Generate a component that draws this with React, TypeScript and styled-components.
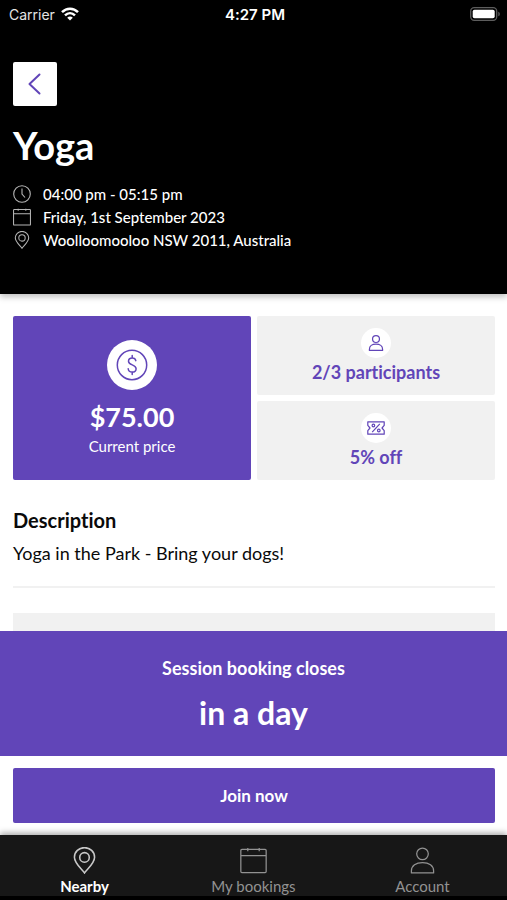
import React from "react";
import styled, { createGlobalStyle } from "styled-components";

const purple = "#6145b8";
const pale = "#f1f1f1";

const GlobalStyle = createGlobalStyle`
  *, *::before, *::after { box-sizing: border-box; }
  body {
    margin: 0;
    background: #fff;
    color: #0a0a0a;
    font-family: Lato, "Open Sans", sans-serif;
    font-variant-ligatures: none;
  }
  h1, h2, p, dl, ul { margin: 0; padding: 0; }
  button { font: inherit; cursor: pointer; }
  svg { display: block; flex: none; }
`;

const Screen = styled.div`
  display: flex;
  flex-direction: column;
  height: 100vh;
  overflow: hidden;
`;

const Header = styled.header`
  flex: none;
  padding: 0 13px 43px;
  background: #000;
  color: #fff;
  box-shadow: 0 3px 6px rgba(0, 0, 0, 0.25);
`;

const StatusBar = styled.div`
  display: grid;
  grid-template-columns: 1fr auto 1fr;
  align-items: center;
  height: 28px;
  margin: 0 -7px 34px -4px;
  font-family: Inter, sans-serif;
  font-size: 14px;
`;

const Carrier = styled.span`
  display: flex;
  align-items: center;
  gap: 6px;
  color: #e4e4e4;
`;

const Clock = styled.span`
  font-size: 15px;
  font-weight: 600;
`;

const BatteryHolder = styled.span`
  justify-self: end;
`;

const BackButton = styled.button`
  display: flex;
  align-items: center;
  justify-content: center;
  width: 44px;
  height: 44px;
  padding: 0;
  border: 0;
  border-radius: 2px;
  background: #fff;
  color: ${purple};
`;

const Title = styled.h1`
  margin: 18px 0 16px;
  font-size: 38px;
  line-height: 42px;
  font-weight: 700;
`;

const Details = styled.ul`
  list-style: none;
`;

const Detail = styled.li`
  display: flex;
  align-items: center;
  gap: 12px;
  height: 23px;
  font-size: 15px;
  font-weight: 500;
`;

const DetailIcon = styled.span`
  display: flex;
  justify-content: center;
  width: 18px;
  color: #b5b5b5;
`;

const Content = styled.main`
  flex: 1;
  min-height: 0;
  overflow: hidden;
  padding: 22px 12px 0 13px;
`;

const Stats = styled.section`
  display: grid;
  grid-template-columns: 1fr 1fr;
  grid-template-rows: 79px 79px;
  gap: 6px;
`;

const Card = styled.div<{ $primary?: boolean }>`
  display: flex;
  flex-direction: column;
  align-items: center;
  justify-content: center;
  padding-top: 2px;
  grid-row: ${(p) => (p.$primary ? "span 2" : "auto")};
  border-radius: 2px;
  background: ${(p) => (p.$primary ? purple : pale)};
  color: ${(p) => (p.$primary ? "#fff" : purple)};
`;

const Disc = styled.span<{ $size: number }>`
  display: flex;
  align-items: center;
  justify-content: center;
  width: ${(p) => p.$size}px;
  height: ${(p) => p.$size}px;
  border-radius: 50%;
  background: #fff;
  color: ${purple};
`;

const Price = styled.strong`
  margin-top: 10px;
  font-size: 27px;
  line-height: 34px;
`;

const PriceLabel = styled.span`
  font-size: 15px;
  line-height: 24px;
`;

const StatText = styled.strong`
  font-size: 18px;
  line-height: 28px;
`;

const Description = styled.section`
  margin-top: 26px;
  padding-bottom: 20px;
  border-bottom: 2px solid ${pale};
`;

const SectionTitle = styled.h2`
  font-size: 20px;
  line-height: 28px;
`;

const SectionText = styled.p`
  margin-top: 6px;
  font-size: 18px;
  line-height: 26px;
`;

const Panel = styled.div`
  height: 120px;
  margin-top: 25px;
  background: ${pale};
`;

const Banner = styled.section`
  flex: none;
  padding: 25px 13px 22px;
  background: ${purple};
  color: #fff;
  text-align: center;
  font-weight: 700;
`;

const BannerLabel = styled.p`
  font-size: 18px;
  line-height: 24px;
`;

const BannerValue = styled.p`
  margin-top: 12px;
  font-size: 32px;
  line-height: 42px;
`;

const Action = styled.div`
  flex: none;
  padding: 12px 12px 12px 13px;
`;

const JoinButton = styled.button`
  width: 100%;
  height: 55px;
  border: 0;
  border-radius: 2px;
  background: ${purple};
  color: #fff;
  font-size: 17px;
  font-weight: 700;
`;

const TabBar = styled.nav`
  display: grid;
  grid-template-columns: repeat(3, 1fr);
  flex: none;
  height: 65px;
  border-bottom: 4px solid #000;
  background: #171717;
  box-shadow: 0 -2px 6px rgba(0, 0, 0, 0.35);
`;

const Tab = styled.a<{ $active?: boolean }>`
  display: flex;
  flex-direction: column;
  align-items: center;
  padding-top: 12px;
  color: ${(p) => (p.$active ? "#fff" : "#929292")};
  font-size: 15px;
  line-height: 24px;
  font-weight: ${(p) => (p.$active ? 700 : 400)};
  text-decoration: none;

  svg {
    color: ${(p) => (p.$active ? "#c8c8c8" : "#929292")};
  }
`;

type IconProps = { size: number; stroke?: number };

const Pin = ({ size, stroke = 1.2 }: IconProps) => (
  <svg width={size} height={size} viewBox="0 0 26 26" fill="none" stroke="currentColor" strokeWidth={stroke} aria-hidden="true">
    <path d="M13 25C11 21.5 3.3 16 3.3 9.8a9.7 9.2 0 0 1 19.4 0C22.7 16 15 21.5 13 25Z" />
    <circle cx="13" cy="10" r="4.6" />
  </svg>
);

const Calendar = ({ size, stroke = 1.2 }: IconProps) => (
  <svg width={size} height={size} viewBox="0 0 26 26" fill="none" stroke="currentColor" strokeWidth={stroke} aria-hidden="true">
    <rect x="0.8" y="2.3" width="24.4" height="22.4" rx="1" />
    <path d="M1 8.3h24M7.5 1v3M18.5 1v3" />
  </svg>
);

const Person = ({ size, stroke = 1.2 }: IconProps) => (
  <svg width={size} height={size} viewBox="0 0 26 26" fill="none" stroke="currentColor" strokeWidth={stroke} strokeLinejoin="round" aria-hidden="true">
    <circle cx="13" cy="6.6" r="5.6" />
    <path d="M2.3 25v-2c0-4.8 4.4-8 10.7-8s10.7 3.2 10.7 8v2Z" />
  </svg>
);

const ClockIcon = () => (
  <svg width="18" height="18" viewBox="0 0 18 18" fill="none" stroke="currentColor" strokeWidth="1.1" aria-hidden="true">
    <circle cx="9" cy="9" r="8.3" />
    <path d="M9 3.5V9l3 3.5" />
  </svg>
);

const Chevron = () => (
  <svg width="16" height="24" viewBox="0 0 16 24" fill="none" stroke="currentColor" strokeWidth="2" strokeLinecap="round" strokeLinejoin="round" aria-hidden="true">
    <path d="M12.5 2.5 2.5 12l10 9.5" />
  </svg>
);

const Dollar = () => (
  <svg width="32" height="32" viewBox="0 0 32 32" fill="none" stroke="currentColor" strokeWidth="1.5" strokeLinecap="round" aria-hidden="true">
    <circle cx="16" cy="16" r="14.7" />
    <path d="M19.8 11.7c-.3-1.8-1.7-2.8-3.6-2.8-2.1 0-3.7 1.3-3.7 3.3 0 4.5 7.6 2.9 7.6 7.5 0 2.1-1.7 3.4-3.9 3.4-2.1 0-3.8-1.2-4-3.3M16.2 6.5v2.4M16.2 23.1v2.4" />
  </svg>
);

const Ticket = () => (
  <svg width="18" height="14" viewBox="0 0 18 14" fill="none" stroke="currentColor" strokeWidth="1.2" strokeLinejoin="round" aria-hidden="true">
    <path d="M.8.8h16.4v3.6L15 7l2.2 2.6v3.6H.8V9.6L3 7 .8 4.4Z" />
    <path d="m12.8 2.8-7.6 8.4" />
    <circle cx="6.4" cy="4.5" r="1.3" />
    <circle cx="11.8" cy="9.5" r="1.3" />
  </svg>
);

const Wifi = () => (
  <svg width="18" height="14" viewBox="0 0 18 14" fill="none" stroke="#fff" strokeWidth="2.5" aria-hidden="true">
    <path d="M1 5.2C5.6.6 12.4.6 17 5.2M4 8.4c3-2.9 7-2.9 10 0" />
    <path d="M9 13.6 6.2 10.7c1.7-1.5 3.9-1.5 5.6 0Z" fill="#fff" stroke="none" />
  </svg>
);

const Battery = () => (
  <svg width="31" height="14" viewBox="0 0 31 14" aria-hidden="true">
    <rect x="0.7" y="0.7" width="26" height="12.6" rx="3.5" fill="none" stroke="#5d5d5d" strokeWidth="1.3" />
    <rect x="2.7" y="2.7" width="22" height="8.6" rx="1.8" fill="#fff" />
    <path d="M28.3 4.7c2 .6 2 4 0 4.6Z" fill="#5d5d5d" />
  </svg>
);

export default function App() {
  return (
    <>
      <GlobalStyle />
      <Screen>
        <Header>
          <StatusBar>
            <Carrier>Carrier <Wifi /></Carrier>
            <Clock>4:27 PM</Clock>
            <BatteryHolder><Battery /></BatteryHolder>
          </StatusBar>
          <BackButton type="button" aria-label="Back"><Chevron /></BackButton>
          <Title>Yoga</Title>
          <Details>
            <Detail><DetailIcon><ClockIcon /></DetailIcon>04:00 pm - 05:15 pm</Detail>
            <Detail><DetailIcon><Calendar size={18} stroke={1.5} /></DetailIcon>Friday, 1st September 2023</Detail>
            <Detail><DetailIcon><Pin size={18} stroke={1.5} /></DetailIcon>Woolloomooloo NSW 2011, Australia</Detail>
          </Details>
        </Header>
        <Content>
          <Stats>
            <Card $primary>
              <Disc $size={50}><Dollar /></Disc>
              <Price>$75.00</Price>
              <PriceLabel>Current price</PriceLabel>
            </Card>
            <Card>
              <Disc $size={30}><Person size={16} stroke={2} /></Disc>
              <StatText>2/3 participants</StatText>
            </Card>
            <Card>
              <Disc $size={30}><Ticket /></Disc>
              <StatText>5% off</StatText>
            </Card>
          </Stats>
          <Description>
            <SectionTitle>Description</SectionTitle>
            <SectionText>Yoga in the Park - Bring your dogs!</SectionText>
          </Description>
          <Panel />
        </Content>
        <Banner>
          <BannerLabel>Session booking closes</BannerLabel>
          <BannerValue>in a day</BannerValue>
        </Banner>
        <Action><JoinButton type="button">Join now</JoinButton></Action>
        <TabBar aria-label="Main">
          <Tab href="#nearby" $active aria-current="page"><Pin size={27} stroke={1.5} />Nearby</Tab>
          <Tab href="#bookings"><Calendar size={27} />My bookings</Tab>
          <Tab href="#account"><Person size={27} />Account</Tab>
        </TabBar>
      </Screen>
    </>
  );
}
